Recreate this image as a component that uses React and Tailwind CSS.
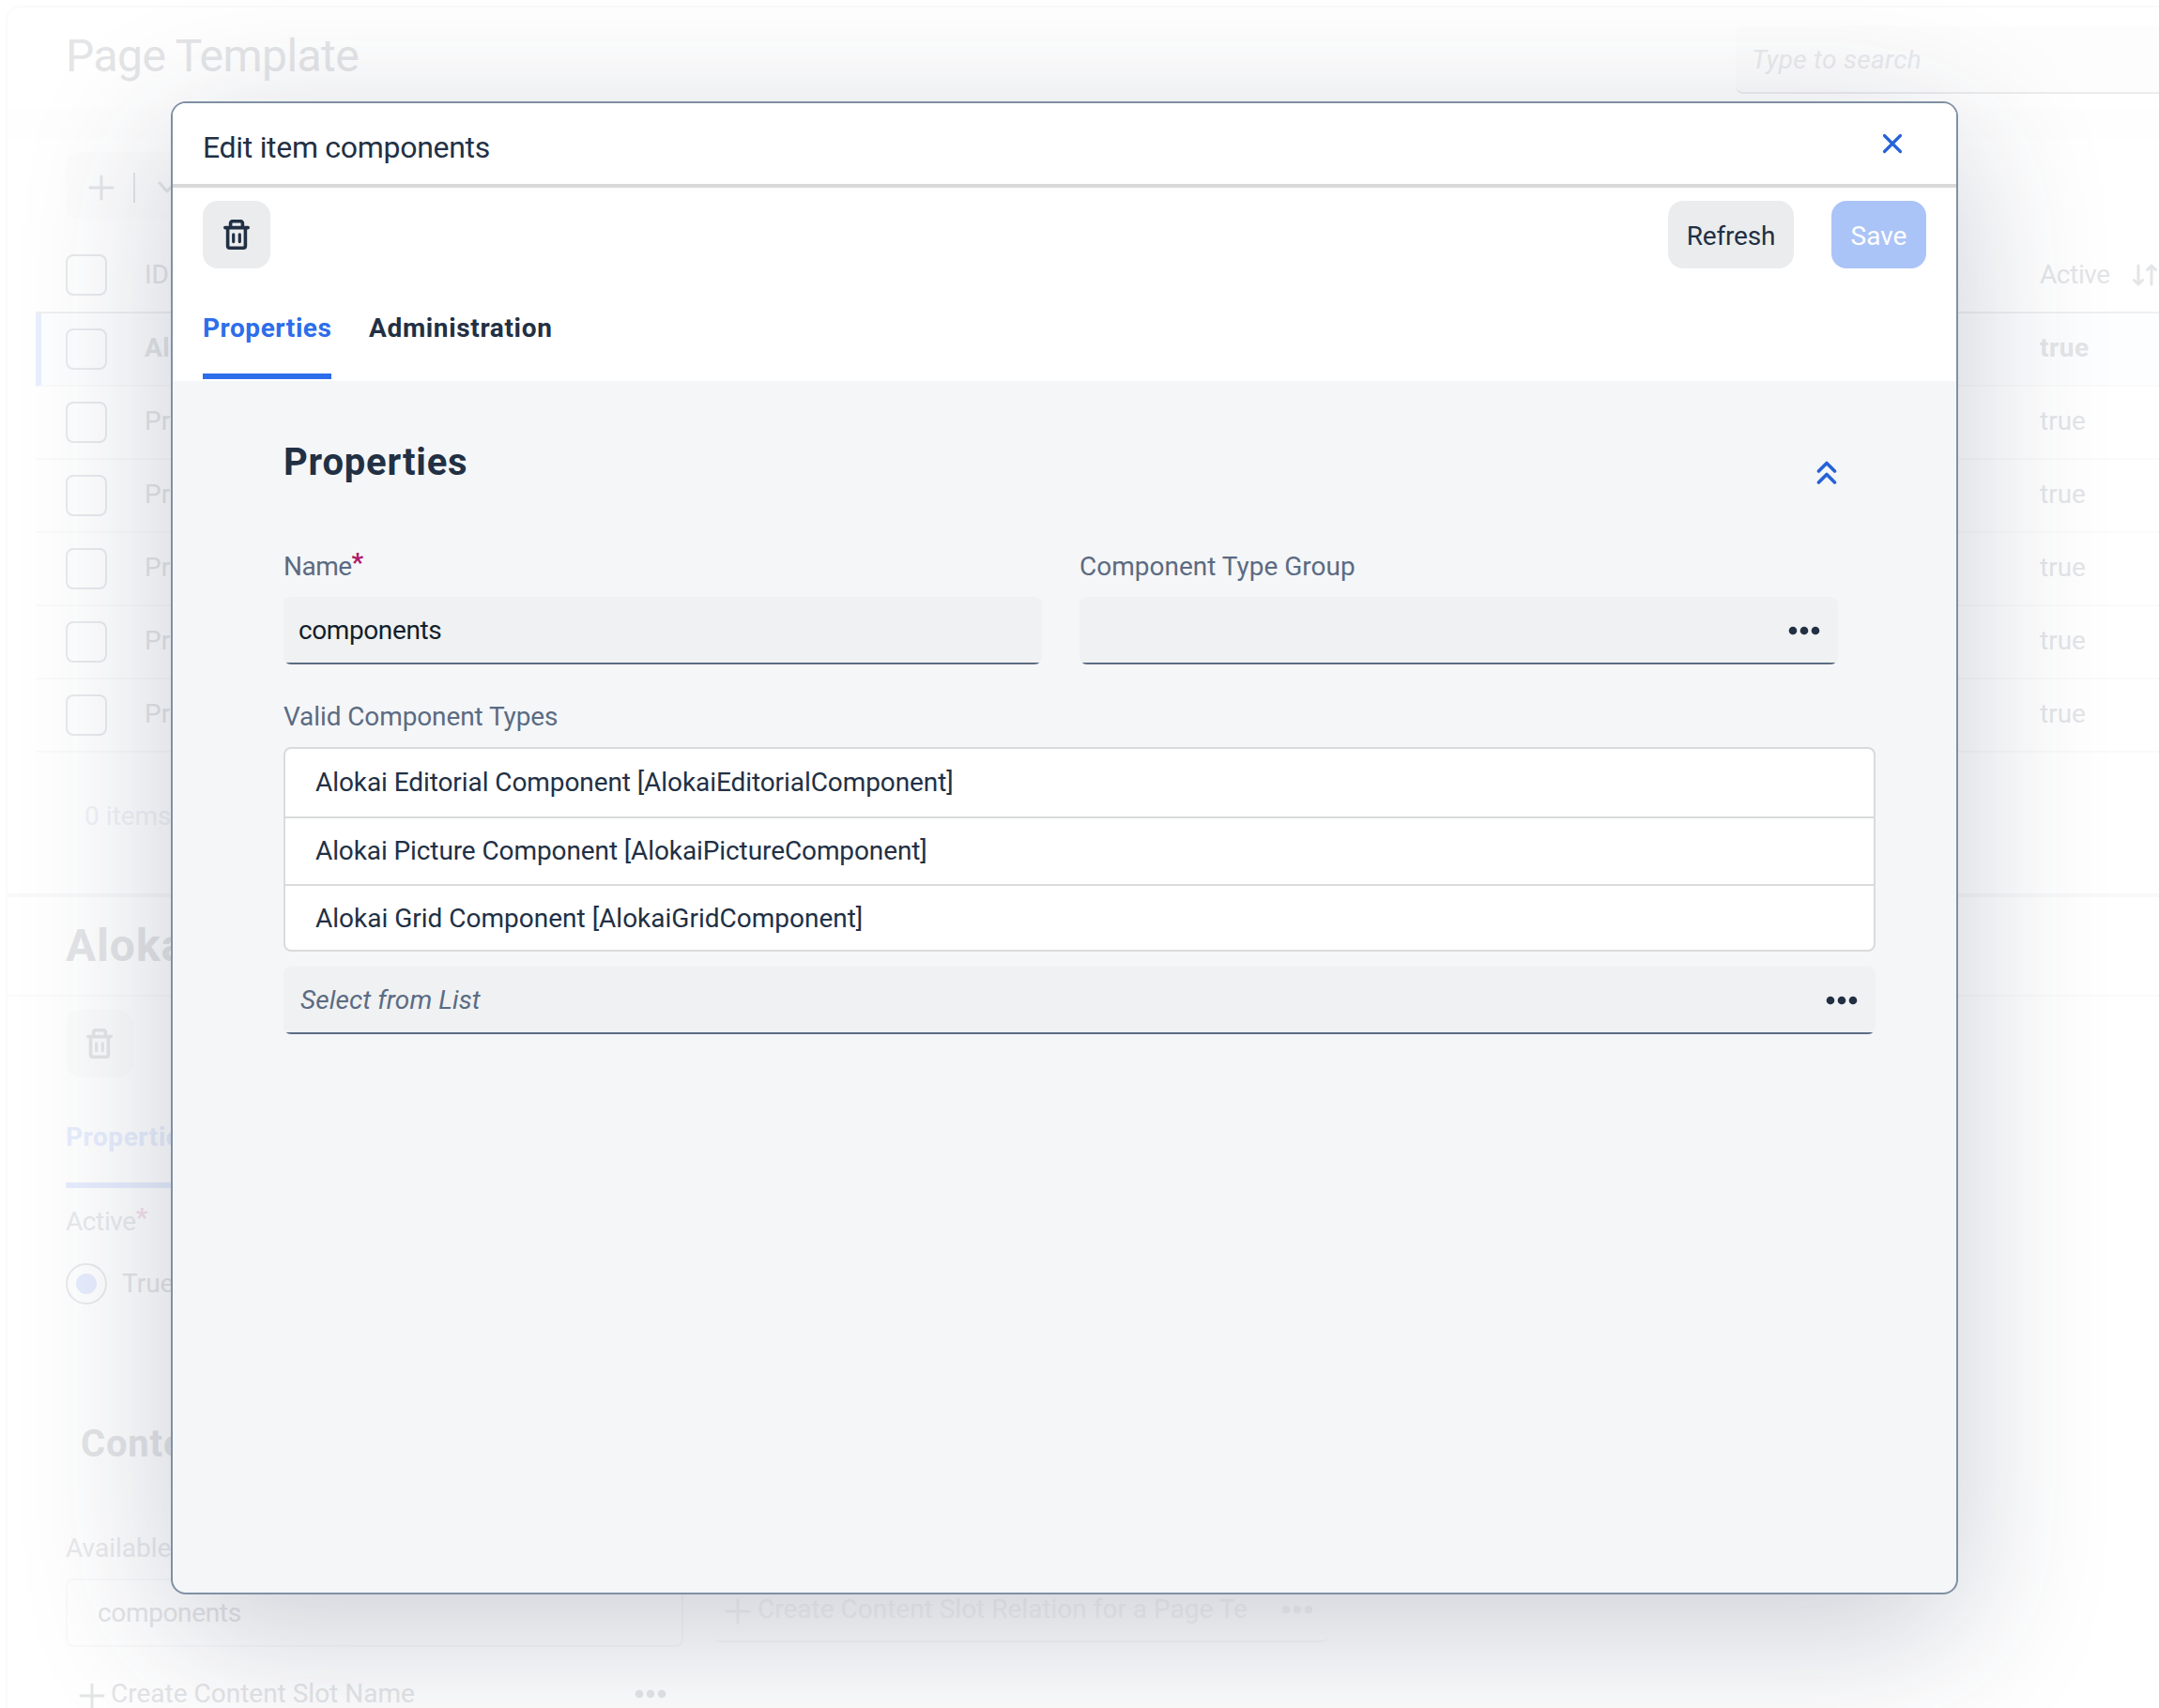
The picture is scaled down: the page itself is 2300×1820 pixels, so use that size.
import React from "react";

const rows = [
  { id: "Alokai", active: "true", selected: true },
  { id: "Product", active: "true" },
  { id: "Product", active: "true" },
  { id: "Product", active: "true" },
  { id: "Product", active: "true" },
  { id: "Product", active: "true" },
];

const componentTypes = [
  { label: "Alokai Editorial Component [AlokaiEditorialComponent]", className: "h-[74px] tracking-[-0.08px]" },
  { label: "Alokai Picture Component [AlokaiPictureComponent]", className: "h-[72px] tracking-[-0.1px]" },
  { label: "Alokai Grid Component [AlokaiGridComponent]", className: "h-[68px] pt-0.5" },
];

function TrashIcon({ className }) {
  return (
    <svg className={className} width="28" height="32" viewBox="0 0 28 32" fill="none" stroke="currentColor" strokeWidth="3.6" strokeLinecap="round" strokeLinejoin="round">
      <path d="M1.8 8.6h24.4" />
      <path d="M7.6 8V4a2.4 2.4 0 0 1 2.4-2.4h8a2.4 2.4 0 0 1 2.4 2.4v4" />
      <path d="M4.6 9v19a2.2 2.2 0 0 0 2.2 2.2h14.400a2.200 2.200 0 0 0 2.200-2.200V9" />
      <path d="M10.7 15.8v7.8M17.3 15.8v7.8" strokeWidth="3.2" />
    </svg>
  );
}

function Dots({ className }) {
  return (
    <svg className={className} width="34" height="10" viewBox="0 0 34 10" fill="currentColor">
      <circle cx="5" cy="5" r="4.3" />
      <circle cx="17" cy="5" r="4.3" />
      <circle cx="29" cy="5" r="4.3" />
    </svg>
  );
}

function PlusIcon({ className }) {
  return (
    <svg className={className} width="28" height="28" viewBox="0 0 28 28" fill="none" stroke="currentColor" strokeWidth="3" strokeLinecap="round">
      <path d="M14 2v24M2 14h24" />
    </svg>
  );
}

function Checkbox() {
  return <div className="h-11 w-11 shrink-0 rounded-lg border-2 border-[#e9eaed]" />;
}

function Field({ children }) {
  return (
    <div className="flex h-[72px] flex-col overflow-hidden rounded-lg bg-[#eff1f2]">
      <div className="flex h-[70px] items-center justify-between pl-4 pr-[19px]">{children}</div>
      <div className="h-0.5 bg-[#5b6b82]" />
    </div>
  );
}

function TemplatePage() {
  return (
    <div className="pl-[6px] pt-[6px] text-[28px] text-[#e4e5e7]">
      <div className="h-[1900px] rounded-tl-2xl border-l-2 border-t-2 border-[#fafafa]">
        <div className="flex h-[108px] items-start justify-between">
          <h1 className="ml-[62px] mt-5 text-[48px] leading-[64px] tracking-[-0.55px]">Page Template</h1>
          <div className="mt-5 flex h-[72px] w-[451px] items-center rounded-l-lg border-b-2 border-[#ececee] bg-[#fdfdfd] pl-[17px] pt-0.5 italic tracking-[0.3px] text-[#e9eaed]">
            Type to search
          </div>
        </div>

        <div className="h-8 bg-[#fefefe]" />

        {/* template list */}
        <div className="pl-[30px]">
          <div className="mt-[14px] ml-8 flex h-[72px] w-36 items-center rounded-2xl bg-[#fdfdfd] pl-6">
            <PlusIcon className="mt-[3px]" />
            <div className="ml-5 mt-1 h-8 w-0.5 bg-[#e4e5e7]" />
            <svg className="ml-6 mt-1" width="20" height="14" viewBox="0 0 20 14" fill="none" stroke="currentColor" strokeWidth="3" strokeLinecap="round" strokeLinejoin="round">
              <path d="M2 2l8 9 8-9" />
            </svg>
          </div>
          <div className="mt-[22px] flex h-[78px] items-center border-b-2 border-[#f0f0f2] pb-0.5 pl-8">
            <Checkbox />
            <span className="ml-10 w-[2019px]">ID</span>
            <span className="tracking-[-0.4px]">Active</span>
            <svg className="ml-6 shrink-0" width="26" height="24" viewBox="0 0 26 24" fill="none" stroke="currentColor" strokeWidth="3" strokeLinecap="round" strokeLinejoin="round">
              <path d="M6 2v20M1.5 17.5L6 22l4.5-4.5M20 22V2M15.5 6.5L20 2l4.5 4.5" />
            </svg>
          </div>
          {rows.map((row, i) => (
            <div
              key={i}
              className={
                row.selected
                  ? "flex h-[78px] items-center border-b-2 border-l-6 border-b-[#fafafa] border-l-[#e9effd] bg-[#fdfeff] pl-[26px] font-bold tracking-[0.02em]"
                  : "flex h-[78px] items-center border-b-2 border-[#fafafa] pl-8"
              }
            >
              <Checkbox />
              <span className="ml-10 w-[2019px] shrink-0 pb-[3px]">{row.id}</span>
              <span className="pb-[3px]">{row.active}</span>
            </div>
          ))}
        </div>
        <div className="flex h-[150px] items-center pb-[14px] pl-[82px] text-[#f1f1f7]">0 items</div>

        {/* selected template */}
        <div className="h-1 bg-[#f9f9fa]" />
        <h2 className="flex h-[106px] items-center border-b-2 border-[#fafafa] pl-[62px] text-[48px] font-bold tracking-[0.02em]">Alokai</h2>
        <div className="ml-[62px] mt-[14px] flex h-[72px] w-[72px] items-center justify-center rounded-2xl bg-[#fcfcfc]">
          <TrashIcon />
        </div>
        <div className="ml-[62px] mt-[42px] flex h-[76px] w-36 items-start border-b-6 border-[#e7edfd] pt-[6px] font-bold leading-[32px] tracking-[0.02em] text-[#e7eefd]">
          Properties
        </div>
        <div className="ml-[62px] mt-[19px] h-[33px] leading-[33px] tracking-[-0.4px] text-[#e9eaed]">
          Active<span className="inline-block -translate-y-1 font-bold text-[#f5e1eb]">*</span>
        </div>
        <div className="ml-[62px] mt-[28px] flex items-center">
          <div className="flex h-11 w-11 items-center justify-center rounded-full border-2 border-[#e9eaed]">
            <div className="h-[22px] w-[22px] rounded-full bg-[#e7edfd]" />
          </div>
          <span className="ml-4">True</span>
        </div>
        <h3 className="ml-[78px] mt-[125px] text-[40px] font-bold leading-[48px] tracking-[0.02em]">Content</h3>
        <div className="ml-[62px] mt-[70px] h-[34px] leading-[34px] text-[#e9eaed]">Available</div>
        <div className="ml-[62px] mt-[15px] flex items-start">
          <div className="w-[658px]">
            <div className="flex h-[73px] items-center rounded-lg border-2 border-[#fafafb] pl-8 pt-[1px] tracking-[-0.35px]">components</div>
            <div className="mt-[14px] flex h-[72px] items-center pl-[14px]">
              <PlusIcon className="mt-1" />
              <span className="ml-[6px]">Create Content Slot Name</span>
              <Dots className="ml-auto mr-[18px]" />
            </div>
          </div>
          <div className="ml-8 flex h-[68px] w-[656px] items-center rounded-lg border-b-2 border-[#fafafb] pl-3 text-[#f5f5f6]">
            <PlusIcon className="mt-1" />
            <span className="ml-[7px]">Create Content Slot Relation for a Page Te</span>
            <Dots className="ml-auto mr-[17px]" />
          </div>
        </div>
      </div>
    </div>
  );
}

function EditDialog() {
  return (
    <div className="absolute left-[182px] top-[108px] flex h-[1591px] w-[1904px] flex-col overflow-hidden rounded-2xl border-2 border-[#8090a4] bg-[#f5f6f8] text-[28px] text-[#223044] shadow-[0_40px_160px_rgba(34,45,80,0.24)]">
      <div className="flex h-[90px] items-center justify-between border-b-4 border-[#d9d9d9] bg-white pl-8 pr-[56px]">
        <h2 className="mt-2 text-[32px] tracking-[-0.3px]">Edit item components</h2>
        <svg width="24" height="24" viewBox="0 0 24 24" fill="none" stroke="#2562d8" strokeWidth="3.2" strokeLinecap="round">
          <path d="M3.5 3.5l17 17M20.5 3.5l-17 17" />
        </svg>
      </div>

      <div className="bg-white px-8">
        <div className="flex pt-[14px]">
          <button className="flex h-[72px] w-[72px] items-center justify-center rounded-2xl bg-[#eaecee]">
            <TrashIcon />
          </button>
          <button className="ml-auto h-[72px] w-[134px] rounded-2xl bg-[#eaecee] pt-[3px] tracking-[-0.15px]">Refresh</button>
          <button className="ml-10 h-[72px] w-[101px] rounded-2xl bg-[#abc4f7] pt-[3px] text-white">Save</button>
        </div>
        <div className="flex h-[120px] items-start gap-10 pt-[40px] font-bold leading-[48px] tracking-[0.02em]">
          <div className="h-[78px] w-[137px] border-b-6 border-[#2d6eea] text-[#2d6eea]">Properties</div>
          <div className="tracking-[0.65px]">Administration</div>
        </div>
      </div>

      <div className="pl-[118px] pr-[86px] text-[#5b6b82]">
        <div className="flex items-start justify-between pr-10 pt-[63px] text-[#223044]">
          <h3 className="text-[40px] font-bold leading-[48px] tracking-[0.02em]">Properties</h3>
          <svg className="mt-[20px]" width="24" height="28" viewBox="0 0 24 28" fill="none" stroke="#2562d8" strokeWidth="3.6" strokeLinecap="round" strokeLinejoin="round">
            <path d="M3.5 13L12 4.500l8.500 8.500M3.500 25L12 16.500l8.500 8.500" />
          </svg>
        </div>

        <div className="mt-[71px] flex gap-10">
          <div className="w-[808px]">
            <label className="block h-[48px] leading-[32px] tracking-[-0.5px]">
              Name<span className="inline-block -translate-y-1 font-bold text-[#b01a6a]">*</span>
            </label>
            <Field>
              <span className="pt-[1px] tracking-[-0.4px] text-[#141e2b]">components</span>
            </Field>
          </div>
          <div className="w-[808px]">
            <label className="block h-[48px] leading-[32px]">Component Type Group</label>
            <Field>
              <Dots className="ml-auto mt-[2px] text-[#223044]" />
            </Field>
          </div>
        </div>

        <label className="mt-10 block h-12 leading-[32px] tracking-[-0.1px]">Valid Component Types</label>
        <div className="overflow-hidden rounded-lg border-2 border-[#d9dadb] bg-white text-[#223044]">
          {componentTypes.map((type) => (
            <div key={type.label} className={`${type.className} flex items-center border-b-2 border-[#d9dadb] pl-8 last:border-b-0`}>
              {type.label}
            </div>
          ))}
        </div>
        <div className="mt-4">
          <Field>
            <span className="pl-[2px] pt-0.5 italic tracking-[0.1px]">Select from List</span>
            <Dots className="mt-[2px] text-[#223044]" />
          </Field>
        </div>
      </div>
    </div>
  );
}

export default function App() {
  return (
    <div className="relative h-[1820px] w-[2300px] overflow-hidden bg-white font-[Roboto,sans-serif]">
      <TemplatePage />
      <EditDialog />
    </div>
  );
}
